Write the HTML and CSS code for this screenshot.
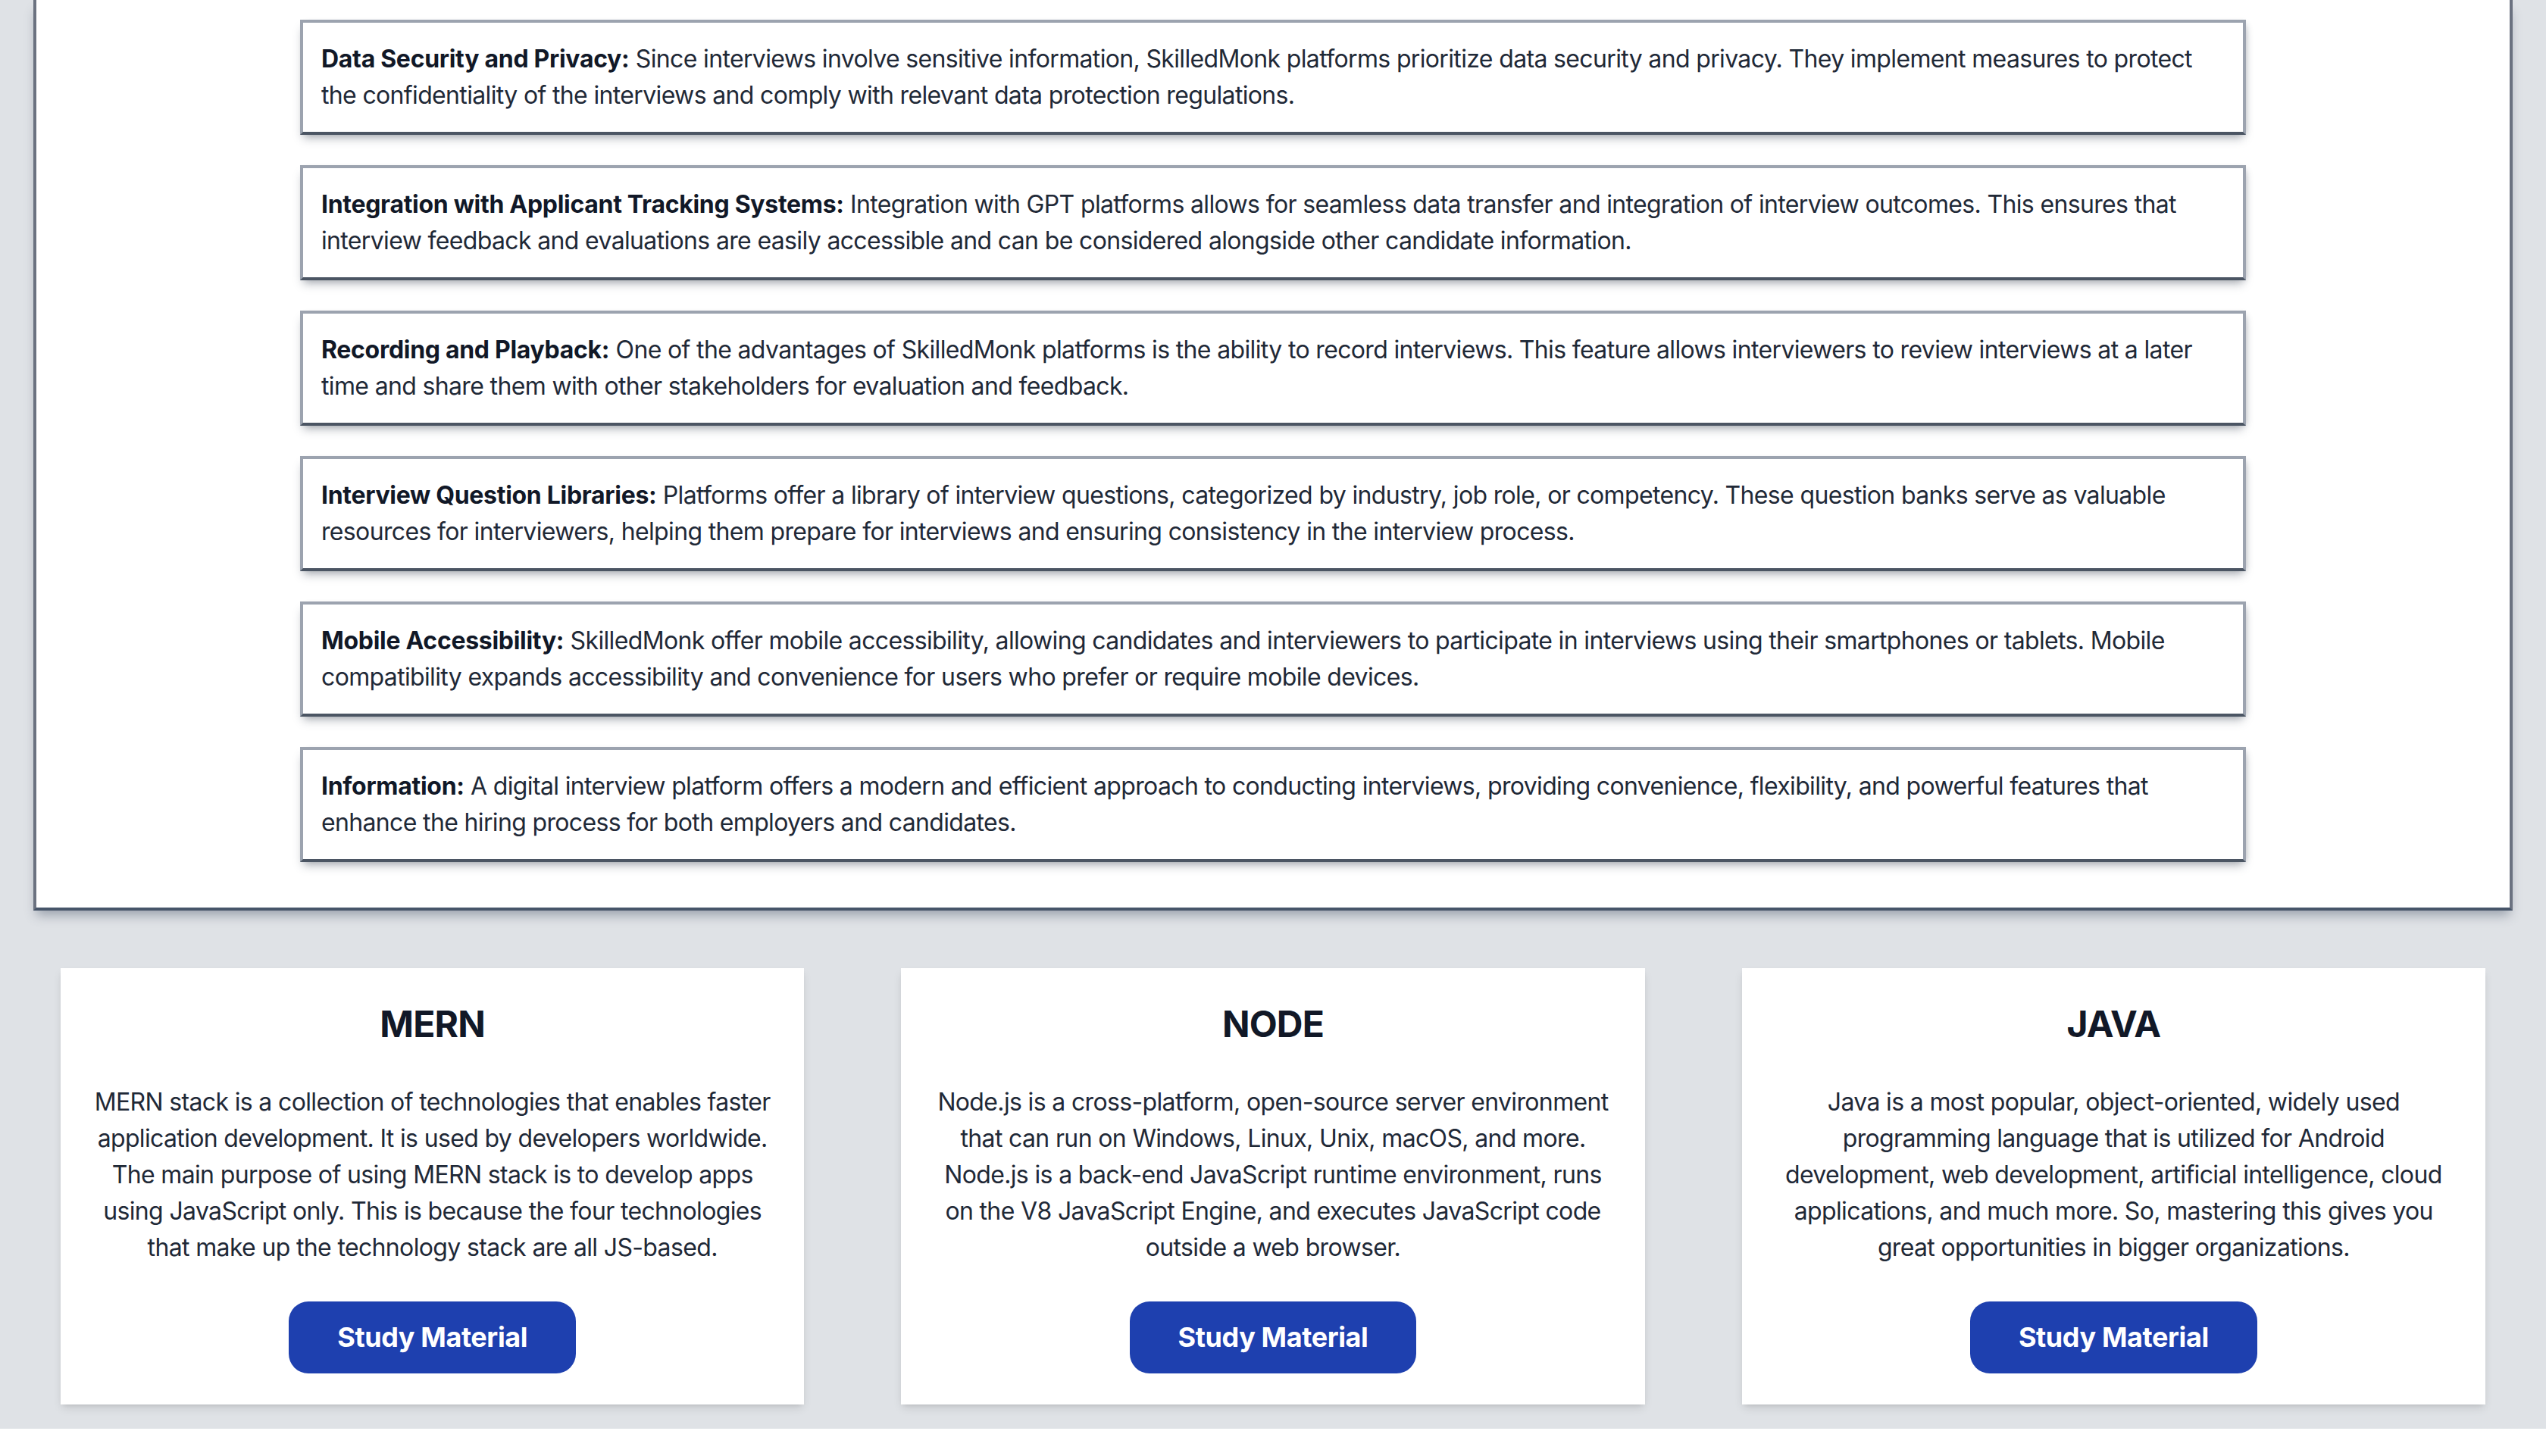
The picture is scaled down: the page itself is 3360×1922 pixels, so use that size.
FILE: index.html
```html
<!DOCTYPE html>
<html lang="en">
<head>
<meta charset="utf-8">
<title>SkilledMonk</title>
<link rel="stylesheet" href="styles.css">
</head>
<body>
<main class="page">
  <section class="panel">
    <div class="feature"><p><strong>Data Security and Privacy:</strong> Since interviews involve sensitive information, SkilledMonk platforms prioritize data security and privacy. They implement measures to protect the confidentiality of the interviews and comply with relevant data protection regulations.</p></div>
    <div class="feature"><p><strong>Integration with Applicant Tracking Systems:</strong> Integration with GPT platforms allows for seamless data transfer and integration of interview outcomes. This ensures that interview feedback and evaluations are easily accessible and can be considered alongside other candidate information.</p></div>
    <div class="feature"><p><strong>Recording and Playback:</strong> One of the advantages of SkilledMonk platforms is the ability to record interviews. This feature allows interviewers to review interviews at a later time and share them with other stakeholders for evaluation and feedback.</p></div>
    <div class="feature"><p><strong>Interview Question Libraries:</strong> Platforms offer a library of interview questions, categorized by industry, job role, or competency. These question banks serve as valuable resources for interviewers, helping them prepare for interviews and ensuring consistency in the interview process.</p></div>
    <div class="feature"><p><strong>Mobile Accessibility:</strong> SkilledMonk offer mobile accessibility, allowing candidates and interviewers to participate in interviews using their smartphones or tablets. Mobile compatibility expands accessibility and convenience for users who prefer or require mobile devices.</p></div>
    <div class="feature"><p><strong>Information:</strong> A digital interview platform offers a modern and efficient approach to conducting interviews, providing convenience, flexibility, and powerful features that enhance the hiring process for both employers and candidates.</p></div>
  </section>

  <section class="courses">
    <article class="card">
      <h2 class="card-title">MERN</h2>
      <p class="card-text">MERN stack is a collection of technologies that enables faster application development. It is used by developers worldwide. The main purpose of using MERN stack is to develop apps using JavaScript only. This is because the four technologies that make up the technology stack are all JS-based.</p>
      <a class="btn" href="#">Study Material</a>
    </article>
    <article class="card">
      <h2 class="card-title">NODE</h2>
      <p class="card-text">Node.js is a cross-platform, open-source server environment that can run on Windows, Linux, Unix, macOS, and more. Node.js is a back-end JavaScript runtime environment, runs on the V8 JavaScript Engine, and executes JavaScript code outside a web browser.</p>
      <a class="btn" href="#">Study Material</a>
    </article>
    <article class="card">
      <h2 class="card-title">JAVA</h2>
      <p class="card-text">Java is a most popular, object-oriented, widely used programming language that is utilized for Android development, web development, artificial intelligence, cloud applications, and much more. So, mastering this gives you great opportunities in bigger organizations.</p>
      <a class="btn" href="#">Study Material</a>
    </article>
  </section>
</main>
</body>
</html>
```

FILE: styles.css
```css
* { box-sizing: border-box; }

html, body {
  margin: 0;
  padding: 0;
  background: #ffffff;
}

body {
  font-family: Inter, "Noto Sans", "Liberation Sans", sans-serif;
  color: #1f2937;
  font-size: 32px;
  line-height: 48px;
  letter-spacing: -0.65px;
}

.page {
  background: #dfe2e6;
  padding: 0 44px 32px;
}

.panel {
  background: #ffffff;
  border: 4px solid #6b7280;
  border-top: none;
  border-bottom-color: #475569;
  box-shadow: 0 10px 14px -4px rgba(71, 85, 105, 0.45);
  padding: 26px 0 60px;
  display: flex;
  flex-direction: column;
  gap: 40px;
}

.feature {
  width: 2568px;
  margin: 0 auto;
  border: 4px solid #9ca3af;
  border-bottom-color: #4b5563;
  padding: 24px;
  background: #ffffff;
  box-shadow: 0 8px 12px -4px rgba(55, 65, 81, 0.4), 4px 2px 8px -4px rgba(55, 65, 81, 0.25);
}

.feature p {
  margin: 0;
  color: #1f2937;
}

.feature strong {
  font-weight: 700;
  color: #111827;
  letter-spacing: -0.3px;
}

.courses {
  margin-top: 76px;
  padding: 0 36px;
  display: grid;
  grid-template-columns: repeat(3, 1fr);
  gap: 128px;
}

.card {
  background: #ffffff;
  padding: 40px 40px 41px;
  box-shadow: 0 6px 12px -2px rgba(0, 0, 0, 0.12), 0 3px 6px -3px rgba(0, 0, 0, 0.1);
  display: flex;
  flex-direction: column;
  align-items: center;
  text-align: center;
}

.card-title {
  margin: 2px 0 47px;
  font-size: 48px;
  line-height: 64px;
  font-weight: 700;
  letter-spacing: -0.8px;
  color: #111827;
}

.card-text {
  margin: 0 0 47px;
  color: #1f2937;
}

.btn {
  display: inline-block;
  background: #1e40af;
  color: #ffffff;
  text-decoration: none;
  font-size: 36px;
  line-height: 55px;
  font-weight: 700;
  letter-spacing: -0.4px;
  padding: 20px 64px;
  border-radius: 26px;
}
```
